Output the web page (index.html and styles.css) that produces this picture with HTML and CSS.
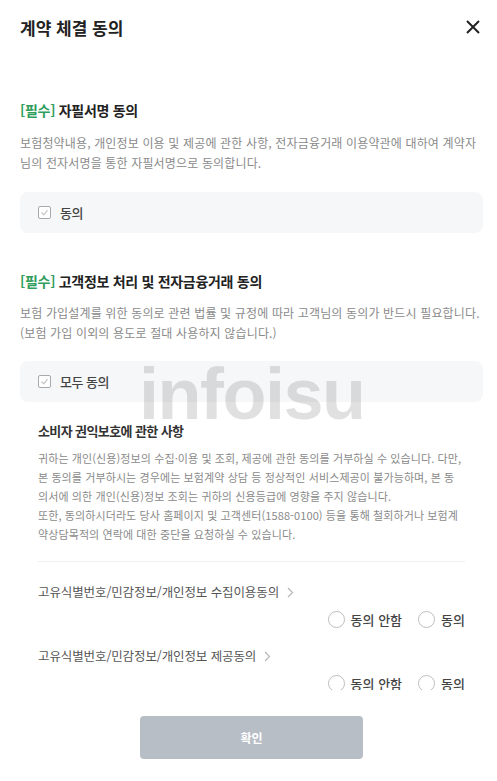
FILE: index.html
```html
<!DOCTYPE html>
<html lang="ko">
<head>
  <meta charset="UTF-8" />
  <meta name="viewport" content="width=device-width, initial-scale=1.0"/>
  <title>계약 체결 동의</title>
  <link rel="stylesheet" href="styles.css">
</head>
<body>
  <div class="modal">
    <div class="modal-head">
      <h1>계약 체결 동의</h1>
      <button class="close" aria-label="닫기">
        <svg width="16" height="16" viewBox="0 0 16 16"><path d="M2 2 L14 14 M14 2 L2 14" stroke="#222" stroke-width="2" fill="none"/></svg>
      </button>
    </div>

    <div class="modal-body">
      <section class="agree">
        <h2><span class="req">[필수]</span> 자필서명 동의</h2>
        <p class="desc">보험청약내용, 개인정보 이용 및 제공에 관한 사항, 전자금융거래 이용약관에 대하여 계약자님의 전자서명을 통한 자필서명으로 동의합니다.</p>
        <label class="check-box">
          <span class="check"><svg width="9" height="9" viewBox="0 0 9 9"><path d="M1.5 4.5 L3.8 6.8 L7.5 2.2" stroke="#c4c4c4" stroke-width="1.2" fill="none"/></svg></span>
          동의
        </label>
      </section>

      <section class="agree">
        <h2><span class="req">[필수]</span> 고객정보 처리 및 전자금융거래 동의</h2>
        <p class="desc">보험 가입설계를 위한 동의로 관련 법률 및 규정에 따라 고객님의 동의가 반드시 필요합니다. (보험 가입 이외의 용도로 절대 사용하지 않습니다.)</p>
        <label class="check-box">
          <span class="check"><svg width="9" height="9" viewBox="0 0 9 9"><path d="M1.5 4.5 L3.8 6.8 L7.5 2.2" stroke="#c4c4c4" stroke-width="1.2" fill="none"/></svg></span>
          모두 동의
        </label>

        <div class="detail">
          <h3>소비자 권익보호에 관한 사항</h3>
          <p>귀하는 개인(신용)정보의 수집·이용 및 조회, 제공에 관한 동의를 거부하실 수 있습니다. 다만, 본 동의를 거부하시는 경우에는 보험계약 상담 등 정상적인 서비스제공이 불가능하며, 본 동<br>의서에 의한 개인(신용)정보 조회는 귀하의 신용등급에 영향을 주지 않습니다.<br>또한, 동의하시더라도 당사 홈페이지 및 고객센터(1588-0100) 등을 통해 철회하거나 보험계<br>약상담목적의 연락에 대한 중단을 요청하실 수 있습니다.</p>

          <div class="item">
            <div class="item-name">고유식별번호/민감정보/개인정보 수집이용동의
              <svg width="7" height="11" viewBox="0 0 7 11"><path d="M1 1 L5.5 5.5 L1 10" stroke="#b5b5b5" stroke-width="1.1" fill="none"/></svg>
            </div>
            <div class="radios">
              <label class="radio"><span class="circle"></span>동의 안함</label>
              <label class="radio"><span class="circle"></span>동의</label>
            </div>
          </div>

          <div class="item">
            <div class="item-name">고유식별번호/민감정보/개인정보 제공동의
              <svg width="7" height="11" viewBox="0 0 7 11"><path d="M1 1 L5.5 5.5 L1 10" stroke="#b5b5b5" stroke-width="1.1" fill="none"/></svg>
            </div>
            <div class="radios">
              <label class="radio"><span class="circle"></span>동의 안함</label>
              <label class="radio"><span class="circle"></span>동의</label>
            </div>
          </div>
        </div>
      </section>
    </div>

    <div class="modal-foot">
      <button class="confirm" disabled>확인</button>
    </div>

    <div class="watermark">infoisu</div>
  </div>
</body>
</html>
```

FILE: styles.css
```css
* {
  box-sizing: border-box;
}
body, html {
  margin: 0;
  padding: 0;
  height: 100vh;
  overflow: hidden;
  background: #fff;
  font-family: "Noto Sans CJK KR", "Noto Sans", sans-serif;
  color: #222;
}
.modal {
  position: relative;
  height: 100vh;
  display: flex;
  flex-direction: column;
}
.modal-head {
  height: 54px;
  flex: none;
  display: flex;
  align-items: center;
  justify-content: space-between;
  padding: 0 15px 0 20px;
}
.modal-head h1 {
  margin: 0;
  font-size: 17px;
  font-weight: 700;
  letter-spacing: 0;
  color: #222;
}
.close {
  border: none;
  background: none;
  padding: 0;
  width: 18px;
  height: 18px;
  display: flex;
  align-items: center;
  justify-content: center;
}
.modal-body {
  flex: 1;
  overflow: hidden;
  padding: 46px 14px 0 20px;
}
.agree h2 {
  margin: 0;
  font-size: 14px;
  line-height: 20px;
  font-weight: 700;
  letter-spacing: -0.3px;
  color: #222;
}
.agree + .agree {
  margin-top: 38px;
}
.req {
  color: #2f9d5c;
}
.desc {
  margin: 13px 0 19px;
  font-size: 12px;
  line-height: 20px;
  letter-spacing: 0.15px;
  color: #8a8a8a;
}
.agree + .agree .desc {
  margin-top: 12px;
  line-height: 19.5px;
}
.check-box {
  display: flex;
  align-items: center;
  gap: 9px;
  height: 41px;
  padding: 0 18px;
  background: #f6f7f9;
  border-radius: 8px;
  font-size: 13px;
  font-weight: 500;
  letter-spacing: -0.5px;
  color: #444;
}
.check {
  width: 13px;
  height: 13px;
  border: 1px solid #a9a9a9;
  border-radius: 2px;
  background: #fff;
  display: flex;
  align-items: center;
  justify-content: center;
}
.detail {
  padding: 19px 18px 0;
}
.detail h3 {
  margin: 0;
  font-size: 13px;
  line-height: 20px;
  font-weight: 700;
  letter-spacing: -0.6px;
  color: #333;
}
.detail p {
  margin: 8px 0 0;
  padding-bottom: 17px;
  border-bottom: 1px solid #eeeff1;
  font-size: 11px;
  line-height: 19px;
  letter-spacing: 0.1px;
  color: #8a8a8a;
}
.item {
  margin-top: 20px;
}
.item + .item {
  margin-top: 17px;
}
.item-name {
  display: flex;
  align-items: center;
  gap: 8px;
  font-size: 12.5px;
  line-height: 20px;
  letter-spacing: -0.1px;
  color: #555;
}
.radios {
  display: flex;
  justify-content: flex-end;
  gap: 16px;
  margin-top: 7px;
}
.radio {
  display: flex;
  align-items: center;
  gap: 6px;
  height: 20px;
  font-size: 13px;
  font-weight: 500;
  letter-spacing: 0;
  color: #444;
}
.circle {
  width: 17px;
  height: 17px;
  border: 1.5px solid #bdbdbd;
  border-radius: 50%;
  background: #fff;
}
.modal-foot {
  height: 91px;
  flex: none;
  background: #fff;
  display: flex;
  justify-content: center;
  padding: 26px 0 0 6px;
}
.confirm {
  width: 223px;
  height: 43px;
  border: none;
  border-radius: 4px;
  background: #b8bec6;
  color: #fff;
  font-family: inherit;
  font-size: 12px;
  font-weight: 700;
}
.watermark {
  position: absolute;
  top: 367px;
  left: 139px;
  font-family: "Liberation Sans", sans-serif;
  font-size: 72px;
  line-height: 54px;
  font-weight: 700;
  letter-spacing: -1.5px;
  color: rgba(0, 0, 0, 0.12);
  pointer-events: none;
}
```
